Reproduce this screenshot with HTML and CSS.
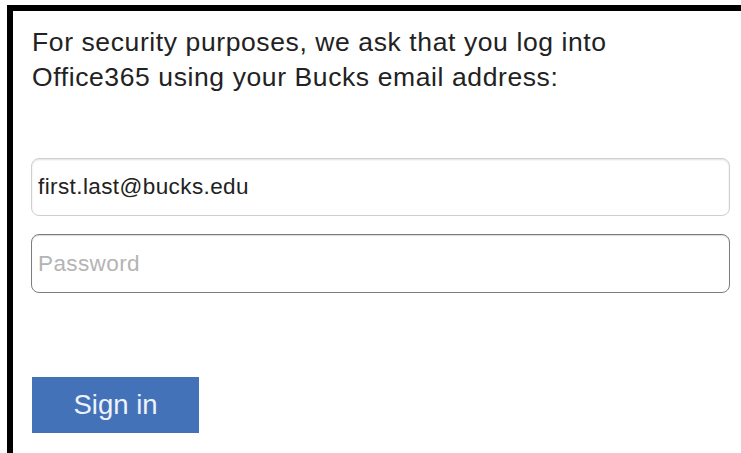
FILE: index.html
```html
<!DOCTYPE html>
<html lang="en">
<head>
<meta charset="utf-8">
<title>Sign in</title>
<link rel="stylesheet" href="styles.css">
</head>
<body>
  <div class="frame">
    <p class="intro">For security purposes, we ask that you log into<br>Office365 using your Bucks email address:</p>
    <form class="login">
      <input class="field field-email" type="text" value="first.last@bucks.edu">
      <input class="field field-password" type="password" placeholder="Password">
      <button class="signin" type="button">Sign in</button>
    </form>
  </div>
</body>
</html>
```
FILE: styles.css
```css
html, body {
  margin: 0;
  padding: 0;
  background: #fff;
  overflow: hidden;
}

.frame {
  box-sizing: border-box;
  margin: 5px 0 0 7px;
  border-top: 6px solid #000;
  border-left: 6px solid #000;
  height: 448px;
  padding: 14px 11px 0 18px;
  font-family: "Liberation Sans", Arial, sans-serif;
  color: #222;
}

.intro {
  margin: 0;
  padding-left: 1px;
  font-size: 26.5px;
  line-height: 35px;
  letter-spacing: 0.6px;
}

.login {
  display: flex;
  flex-direction: column;
  align-items: flex-start;
  margin-top: 63px;
}

.field {
  box-sizing: border-box;
  width: 100%;
  height: 58px;
  margin: 0 0 18px 0;
  padding: 0 6px;
  border-radius: 8px;
  font-family: "Liberation Sans", Arial, sans-serif;
  font-size: 22.5px;
  letter-spacing: 0.4px;
  color: #222;
  background: #fff;
  outline: none;
}

.field-email {
  border: 1px solid #cfcfcf;
  box-shadow: inset 0 1px 2px rgba(0, 0, 0, 0.12);
}

.field-password {
  height: 59px;
  border: 1px solid #7d7d7d;
  box-shadow: inset 0 1px 1px rgba(0, 0, 0, 0.15);
}

.field-password::placeholder {
  color: #b4b4b4;
}

.signin {
  margin-top: 66px;
  margin-left: 1px;
  width: 167px;
  height: 56px;
  border: 0;
  border-radius: 0;
  background: #4472b9;
  color: #eef3fb;
  font-family: "Liberation Sans", Arial, sans-serif;
  font-size: 27.5px;
  padding: 0;
}
```
